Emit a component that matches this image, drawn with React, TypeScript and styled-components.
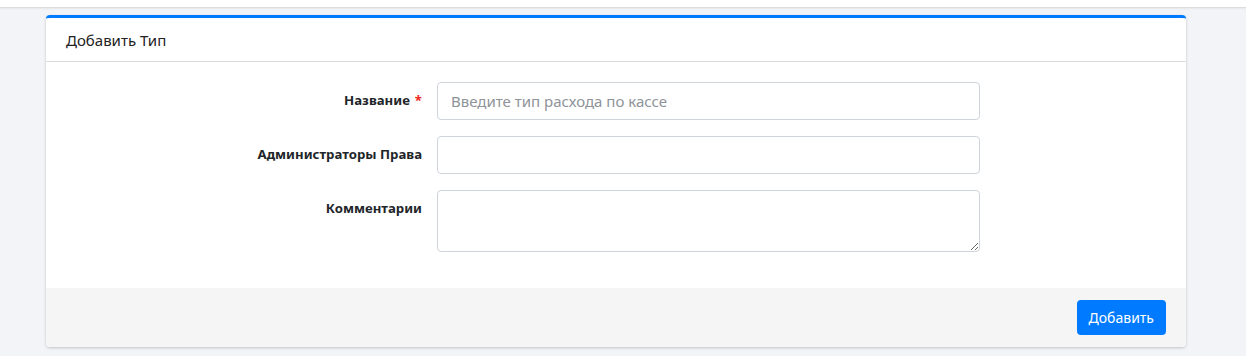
import React from 'react';
import styled, { createGlobalStyle } from 'styled-components';

const GlobalStyle = createGlobalStyle`
    html, body {
        margin: 0;
        padding: 0;
        background: #f3f4f8;
        font-family: 'Noto Sans', 'Open Sans', sans-serif;
        color: #212529;
    }
    * {
        box-sizing: border-box;
    }
`;

const TopBar = styled.div`
    height: 8px;
    background: #fff;
    border-bottom: 1px solid #dcdde1;
    box-shadow: 0 1px 2px rgba(0, 0, 0, 0.05);
`;

const Page = styled.div`
    padding: 7px 60px 8px 46px;
`;

const Card = styled.div`
    width: 1140px;
    background: #fff;
    border-top: 3px solid #007bff;
    border-radius: 4px;
    box-shadow: 0 1px 3px rgba(0, 0, 0, 0.2);
    overflow: hidden;
`;

const CardHeader = styled.div`
    height: 44px;
    padding: 0 20px;
    display: flex;
    align-items: center;
    border-bottom: 1px solid #dcdcdc;
    font-size: 15px;
    color: #222;
`;

const CardBody = styled.div`
    padding: 20px 20px 20px;
    display: grid;
    grid-template-columns: 356px 543px;
    column-gap: 15px;
    row-gap: 16px;
`;

const Label = styled.label`
    text-align: right;
    font-size: 13.2px;
    font-weight: 700;
    line-height: 20px;
    padding-top: 8px;
    color: #212529;
`;

const Required = styled.span`
    color: #f0261c;
    margin-left: 5px;
`;

const Input = styled.input`
    width: 543px;
    height: 38px;
    padding: 0 13px;
    border: 1px solid #ced4da;
    border-radius: 4px;
    font-family: inherit;
    font-size: 15px;
    color: #495057;
    outline: none;

    &::placeholder {
        color: #8e9399;
    }
`;

const TextArea = styled.textarea`
    width: 543px;
    height: 62px;
    padding: 8px 13px;
    border: 1px solid #ced4da;
    border-radius: 4px;
    font-family: inherit;
    font-size: 15px;
    outline: none;
    display: block;
`;

const CardFooter = styled.div`
    margin-top: 16px;
    background: #f5f5f5;
    padding: 12px 20px 12px;
    display: flex;
    justify-content: flex-end;
`;

const SubmitButton = styled.button`
    height: 35px;
    padding: 0 12px;
    border: none;
    border-radius: 4px;
    background: #007bff;
    color: #fff;
    font-family: inherit;
    font-size: 14px;
    cursor: pointer;
`;

export default function App() {
    return (
        <>
            <GlobalStyle />
            <TopBar />
            <Page>
                <Card>
                    <CardHeader>Добавить Тип</CardHeader>
                    <CardBody>
                        <Label>
                            Название<Required>*</Required>
                        </Label>
                        <Input placeholder='Введите тип расхода по кассе' />
                        <Label>Администраторы Права</Label>
                        <Input />
                        <Label>Комментарии</Label>
                        <TextArea />
                    </CardBody>
                    <CardFooter>
                        <SubmitButton>Добавить</SubmitButton>
                    </CardFooter>
                </Card>
            </Page>
        </>
    );
}
